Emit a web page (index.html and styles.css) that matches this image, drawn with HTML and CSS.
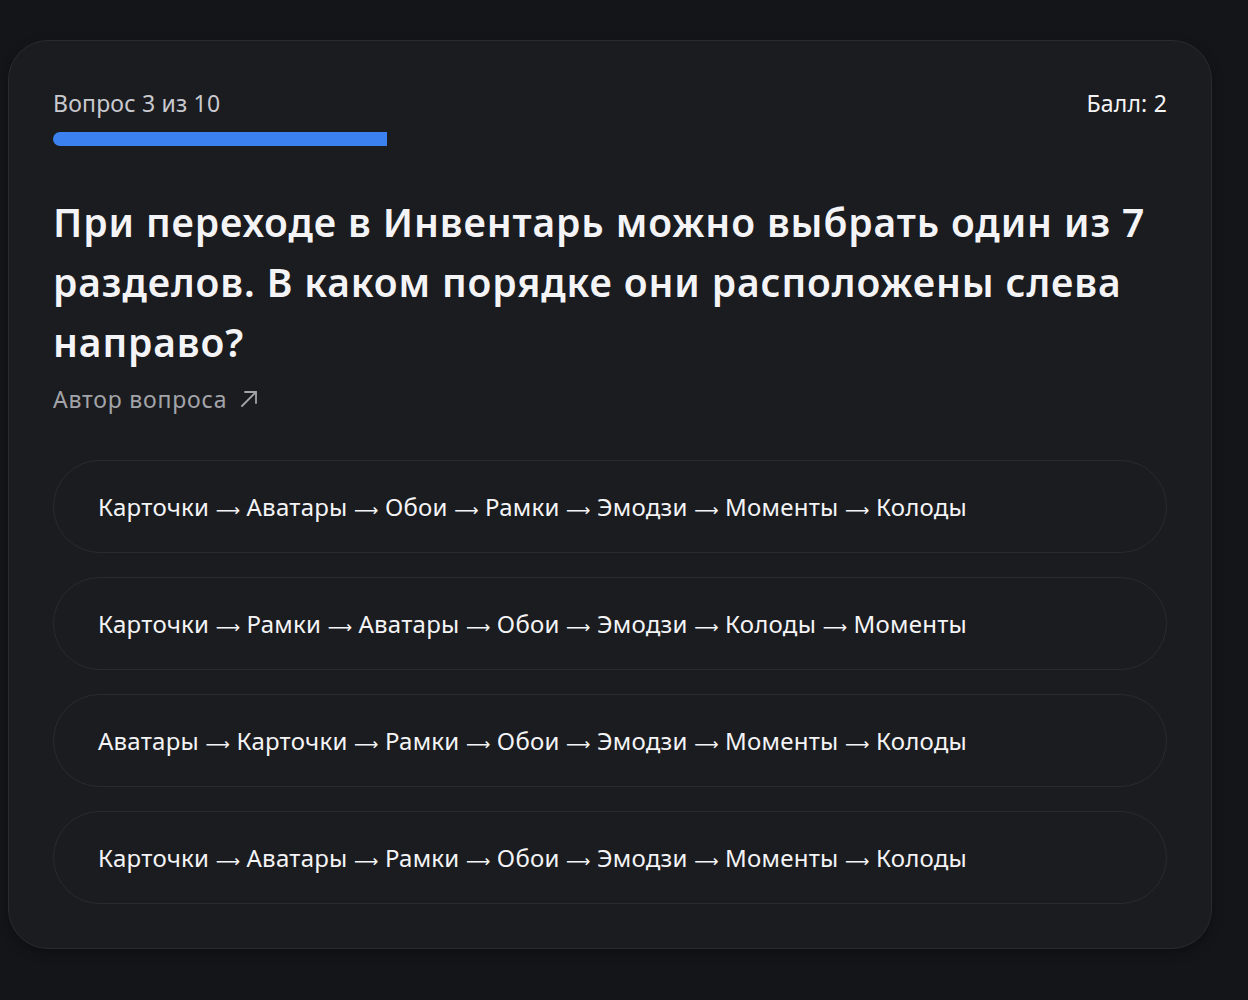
FILE: index.html
```html
<!DOCTYPE html>
<html lang="ru">
<head>
    <meta charset="UTF-8">
    <meta name="viewport" content="width=device-width, initial-scale=1.0">
    <title>Викторина</title>
    <link rel="stylesheet" href="styles.css">
</head>
<body>
    <main class="quiz-card">
        <div class="quiz-top">
            <span class="quiz-counter">Вопрос 3 из 10</span>
            <span class="quiz-score">Балл: 2</span>
        </div>
        <div class="progress">
            <div class="progress-fill" style="width: 30%"></div>
        </div>

        <h1 class="quiz-question">При переходе в Инвентарь можно выбрать один из 7 разделов. В каком порядке они расположены слева направо?</h1>
        <a href="#" class="quiz-author">Автор вопроса
            <svg width="20" height="20" viewBox="0 0 20 20" fill="none" stroke="currentColor" stroke-width="1.8" stroke-linecap="round" stroke-linejoin="round"><path d="M3 17L17 3"/><path d="M6 3h11v11"/></svg>
        </a>

        <div class="quiz-options">
            <button class="option">Карточки <span class="arrow">⟶</span> Аватары <span class="arrow">⟶</span> Обои <span class="arrow">⟶</span> Рамки <span class="arrow">⟶</span> Эмодзи <span class="arrow">⟶</span> Моменты <span class="arrow">⟶</span> Колоды</button>
            <button class="option">Карточки <span class="arrow">⟶</span> Рамки <span class="arrow">⟶</span> Аватары <span class="arrow">⟶</span> Обои <span class="arrow">⟶</span> Эмодзи <span class="arrow">⟶</span> Колоды <span class="arrow">⟶</span> Моменты</button>
            <button class="option">Аватары <span class="arrow">⟶</span> Карточки <span class="arrow">⟶</span> Рамки <span class="arrow">⟶</span> Обои <span class="arrow">⟶</span> Эмодзи <span class="arrow">⟶</span> Моменты <span class="arrow">⟶</span> Колоды</button>
            <button class="option">Карточки <span class="arrow">⟶</span> Аватары <span class="arrow">⟶</span> Рамки <span class="arrow">⟶</span> Обои <span class="arrow">⟶</span> Эмодзи <span class="arrow">⟶</span> Моменты <span class="arrow">⟶</span> Колоды</button>
        </div>
    </main>
</body>
</html>
```
FILE: styles.css
```css
:root {
    --bg-page: #141518;
    --bg-card: #1b1c20;
    --border: #2a2b30;
    --text-main: #f4f4f6;
    --text-muted: #a3a4a9;
    --accent: #3b82f0;
}
* { box-sizing: border-box; margin: 0; padding: 0; }
body {
    font-family: 'Noto Sans', 'DejaVu Sans', sans-serif;
    background-color: var(--bg-page);
    color: var(--text-main);
    padding: 40px 36px 52px 8px;
}
.quiz-card {
    background-color: var(--bg-card);
    border: 1px solid var(--border);
    border-radius: 40px;
    padding: 44px 44px 44px 44px;
    box-shadow: 0 4px 12px rgba(0, 0, 0, 0.3);
}
.quiz-top {
    display: flex; justify-content: space-between; align-items: center;
    font-size: 23px; line-height: 36px; letter-spacing: 0.2px;
}
.quiz-counter { color: #c9cacf; }
.quiz-score { color: var(--text-main); }
.progress {
    margin-top: 11px; height: 14px; border-radius: 7px;
    overflow: hidden; background-color: var(--bg-card);
}
.progress-fill { height: 100%; background-color: var(--accent); }
.quiz-question {
    margin-top: 46px; font-size: 39px; font-weight: 600; line-height: 60px;
    letter-spacing: 0.9px; color: var(--text-main);
}
.quiz-author {
    display: inline-flex; align-items: center; gap: 12px; margin-top: 7px;
    font-size: 23px; line-height: 40px; letter-spacing: 0.8px;
    color: var(--text-muted); text-decoration: none;
}
.quiz-options { display: flex; flex-direction: column; gap: 24px; margin-top: 41px; }
.option {
    display: block; width: 100%; height: 93px; padding: 0 44px; text-align: left;
    background-color: var(--bg-card); border: 1px solid var(--border); border-radius: 47px;
    color: var(--text-main); font-family: inherit; font-size: 24px; letter-spacing: 0.25px;
    cursor: pointer;
}
.option .arrow { font-family: 'DejaVu Sans', sans-serif; font-size: 17px; letter-spacing: 0; }
.option:hover { border-color: #3a3b41; }
```
